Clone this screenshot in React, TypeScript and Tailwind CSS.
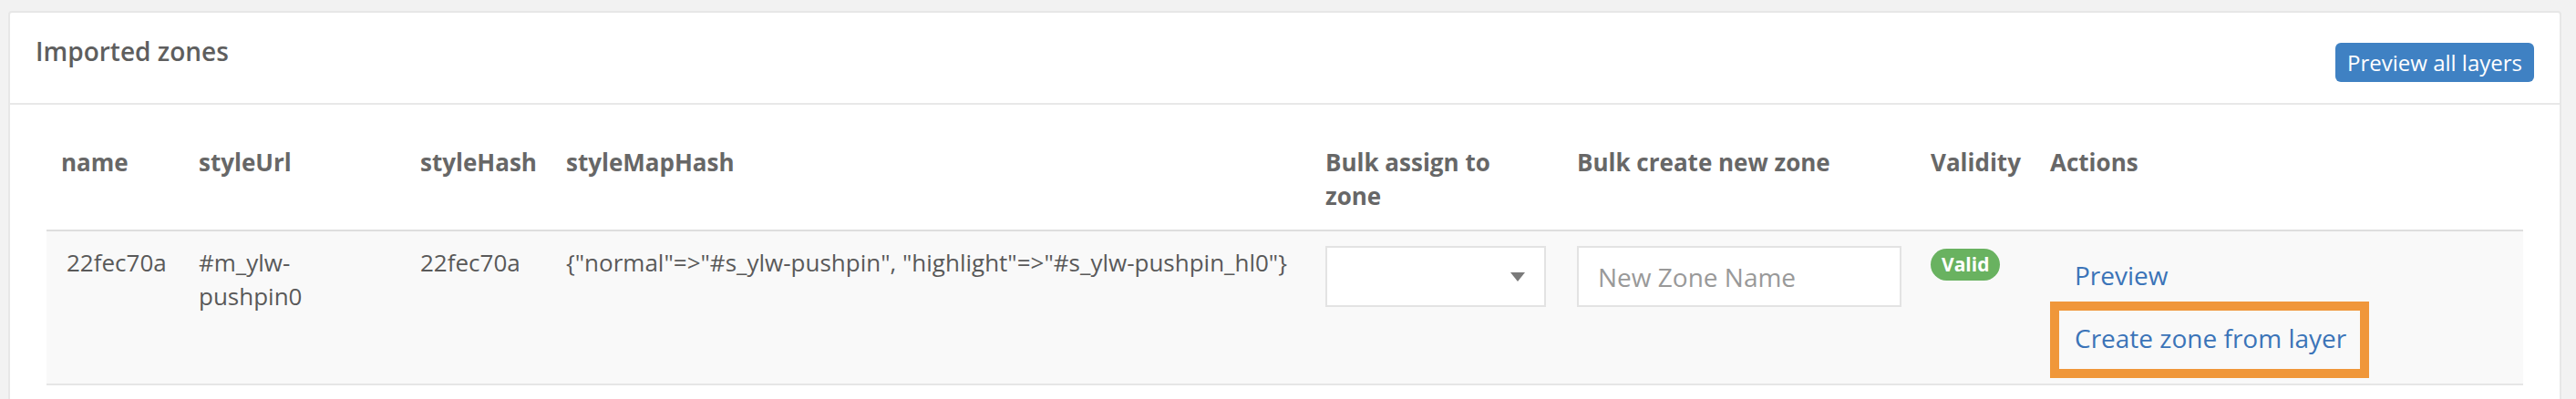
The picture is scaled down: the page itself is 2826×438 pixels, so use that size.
import React from 'react';

const rows = [
  {
    name: '22fec70a',
    styleUrl: '#m_ylw-pushpin0',
    styleHash: '22fec70a',
    styleMapHash: '{"normal"=>"#s_ylw-pushpin", "highlight"=>"#s_ylw-pushpin_hl0"}',
    valid: true,
  },
];

const th = 'px-[16px] pt-[16px] pb-[18px] text-left align-top font-bold text-[#676767]';
const td = 'px-[16px] pt-[16px] align-top';

export default function App() {
  return (
    <div className="min-h-screen bg-[#f2f2f2] pt-[12px] pl-[9px] pr-[16px] font-['Open_Sans',sans-serif]">
      <div className="rounded-[4px] border-2 border-[#e7e7e7] bg-white">
        {/* heading */}
        <div className="flex h-[101px] items-start justify-between border-b-2 border-[#e8e8e8] px-[28px]">
          <h3 className="pt-[26px] text-[28px] leading-[33px] font-semibold text-[#5e5e5e]">Imported zones</h3>
          <button className="mt-[33px] rounded-[6px] bg-[#3f81c3] px-[13px] py-[5px] text-[24px] leading-[33px] text-white">
            Preview all layers
          </button>
        </div>

        {/* body */}
        <div className="px-[40px] pt-[29px] pb-[40px]">
          <table className="w-full table-fixed border-collapse text-[26px] leading-[37px]">
            <colgroup>
              <col className="w-[151px]" />
              <col className="w-[243px]" />
              <col className="w-[160px]" />
              <col className="w-[833px]" />
              <col className="w-[276px]" />
              <col className="w-[388px]" />
              <col className="w-[131px]" />
              <col />
            </colgroup>
            <thead>
              <tr className="border-b-2 border-[#dedede]">
                <th className={th}>name</th>
                <th className={th}>styleUrl</th>
                <th className={th}>styleHash</th>
                <th className={th}>styleMapHash</th>
                <th className={th}>Bulk assign to zone</th>
                <th className={th}>Bulk create new zone</th>
                <th className={th}>Validity</th>
                <th className={th}>Actions</th>
              </tr>
            </thead>
            <tbody>
              {rows.map((r) => (
                <tr key={r.name} className="border-b-2 border-[#e6e6e6] bg-[#f9f9f9] text-[#595959]">
                  <td className={`${td} pl-[22px]`}>{r.name}</td>
                  <td className={td}>{r.styleUrl}</td>
                  <td className={td}>{r.styleHash}</td>
                  <td className={`${td} whitespace-nowrap`}>{r.styleMapHash}</td>
                  <td className={td}>
                    <div className="flex h-[67px] w-[242px] items-center justify-end border-2 border-[#e3e3e3] bg-white pr-[21px]">
                      <svg width="16" height="10" viewBox="0 0 16 10">
                        <path d="M0 0 L16 0 L8 10 Z" fill="#7a7a7a" />
                      </svg>
                    </div>
                  </td>
                  <td className={td}>
                    <input
                      type="text"
                      placeholder="New Zone Name"
                      className="h-[67px] w-[356px] border-2 border-[#e3e3e3] bg-white pl-[21px] text-[28px] text-[#555] outline-none placeholder:text-[#999]"
                    />
                  </td>
                  <td className={td}>
                    {r.valid && (
                      <span className="mt-[2px] inline-block h-[35px] rounded-full bg-[#69b260] px-[12px] text-[21px] leading-[35px] font-bold text-white">
                        Valid
                      </span>
                    )}
                  </td>
                  <td className={`${td} pb-[6px]`}>
                    <div className="flex flex-col items-start text-[28px] leading-[40px] text-[#3b74b8]">
                      <a href="#" className="mt-[12px] pl-[27px]">Preview</a>
                      <a href="#" className="mt-[9px] border-[10px] border-[#f0973a] pt-[10px] pb-[14px] pl-[17px] pr-[15px]">
                        Create zone from layer
                      </a>
                    </div>
                  </td>
                </tr>
              ))}
            </tbody>
          </table>
        </div>
      </div>
    </div>
  );
}
